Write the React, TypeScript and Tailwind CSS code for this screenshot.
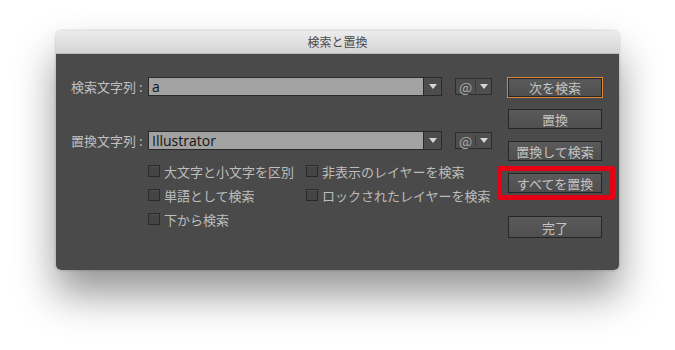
import React from 'react';

const FONT = { fontFamily: '"Noto Sans CJK JP", "Noto Sans", sans-serif' };

function Triangle() {
  return (
    <svg width="8" height="5" viewBox="0 0 8 5">
      <path d="M0 0 H8 L4 5 Z" fill="#d6d6d6" />
    </svg>
  );
}

function Field({ label, value }: { label: string; value: string }) {
  return (
    <div className="flex items-center h-[19px]">
      <span className="w-[77px] text-[13px] text-[#c0c0c0] leading-none whitespace-nowrap">{label}</span>
      <div className="flex w-[294px] h-[19px] border border-[#2a2a2a]">
        <div className="flex-1 bg-[#a2a2a2] pl-[3px] text-[14px] leading-[17px] text-[#141414]" style={{ fontFamily: '"Open Sans", "Noto Sans", sans-serif' }}>
          {value}
        </div>
        <div className="w-[18px] bg-[#4d4d4d] border-l border-[#2a2a2a] flex items-center justify-center">
          <Triangle />
        </div>
      </div>
      <div className="ml-[13px] flex items-center w-[37px] h-[17px] border border-[#2c2c2c] bg-[#4e4e4e]">
        <span className="w-[19px] text-center text-[14px] leading-none text-[#a8a8a8]">@</span>
        <span className="w-px h-[11px] bg-[#3a3a3a]" />
        <span className="flex-1 flex justify-center"><Triangle /></span>
      </div>
    </div>
  );
}

function Check({ label }: { label: string }) {
  return (
    <div className="flex items-center h-[24px] gap-[4px]">
      <span className="w-[12px] h-[12px] border border-[#2a2a2a] bg-[#454545] shadow-[inset_0_1px_0_rgba(255,255,255,0.06)]" />
      <span className="text-[13px] text-[#bdbdbd] leading-none whitespace-nowrap">{label}</span>
    </div>
  );
}

function Btn({ children, tall }: { children: React.ReactNode; tall?: boolean }) {
  return (
    <div className={`ml-px w-[94px] ${tall ? 'h-[22px]' : 'h-[20px]'} flex items-center justify-center border border-[#262626] bg-gradient-to-b from-[#5a5a5a] to-[#4f4f4f] text-[13px] text-[#c4c4c4] leading-none`}>
      {children}
    </div>
  );
}

export default function App() {
  return (
    <div className="w-[675px] h-[350px] bg-white pl-[56px] pt-[31px]" style={FONT}>
      <div className="w-[563px] h-[239px] rounded-[5px] overflow-hidden shadow-[0_24px_40px_rgba(0,0,0,0.42),0_0_3px_rgba(0,0,0,0.25)]">
        <div className="h-[23px] bg-gradient-to-b from-[#ececec] to-[#d5d5d5] border-b border-[#b9b9b9] flex items-center justify-center text-[12px] text-[#4a4a4a]">
          検索と置換
        </div>
        <div className="h-[216px] bg-[#4a4a4a] flex">
          <div className="w-[451px] pl-[15px] pt-[23px]">
            <Field label="検索文字列 :" value="a" />
            <div className="mt-[35px]">
              <Field label="置換文字列 :" value="Illustrator" />
            </div>
            <div className="ml-[77px] mt-[9px] grid grid-cols-[158px_1fr]">
              <Check label="大文字と小文字を区別" />
              <Check label="非表示のレイヤーを検索" />
              <Check label="単語として検索" />
              <Check label="ロックされたレイヤーを検索" />
              <Check label="下から検索" />
            </div>
          </div>
          <div className="w-[96px] pt-[23px] flex flex-col">
            <div className="w-[96px] h-[21px] border border-[#d9883a] flex">
              <div className="flex-1 flex items-center justify-center border border-[#262626] bg-gradient-to-b from-[#5a5a5a] to-[#4f4f4f] text-[13px] text-[#c4c4c4] leading-none">
                次を検索
              </div>
            </div>
            <div className="mt-[11px]"><Btn>置換</Btn></div>
            <div className="mt-[12px]"><Btn>置換して検索</Btn></div>
            <div className="mt-[12px] relative">
              <Btn>すべてを置換</Btn>
              <div className="absolute left-[-10px] top-[-7px] w-[118px] h-[34px] border-[5px] border-[#e60014] rounded-[3px]" />
            </div>
            <div className="mt-[23px]"><Btn tall>完了</Btn></div>
          </div>
        </div>
      </div>
    </div>
  );
}
